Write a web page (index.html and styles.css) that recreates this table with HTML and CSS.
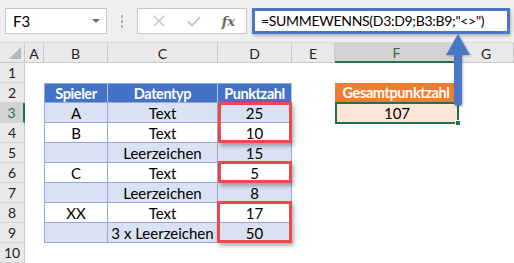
FILE: index.html
```html
<!DOCTYPE html>
<html lang="de">
<head>
<meta charset="utf-8">
<link rel="stylesheet" href="styles.css">
</head>
<body>
<div class="app">
  <div class="toolbar">
    <div class="namebox"><span class="ref">F3</span><span class="caret"></span></div>
    <div class="dots"><i></i><i></i><i></i></div>
    <div class="fbtns">
      <svg class="ico" width="14" height="14" viewBox="0 0 14 14"><path d="M2 2 L12 12 M12 2 L2 12" stroke="#c8c8c8" stroke-width="1.6" fill="none"/></svg>
      <svg class="ico" width="16" height="14" viewBox="0 0 16 14"><path d="M2 7.5 L6 11.5 L14 3" stroke="#c8c8c8" stroke-width="2" fill="none"/></svg>
      <span class="fx">fx</span>
    </div>
    <div class="formula">=SUMMEWENNS(D3:D9;B3:B9;"&lt;&gt;")</div>
  </div>
  <div class="sheet">
    <div class="hd corner"><span class="tri"></span></div>
    <div class="hd col">A</div><div class="hd col">B</div><div class="hd col">C</div><div class="hd col">D</div><div class="hd col">E</div><div class="hd col sel">F</div><div class="hd col">G</div>

    <div class="hd row">1</div><div></div><div></div><div></div><div></div><div></div><div></div><div></div>

    <div class="hd row">2</div><div></div>
    <div class="t th first">Spieler</div><div class="t th">Datentyp</div><div class="t th">Punktzahl</div>
    <div></div><div class="orange">Gesamtpunktzahl</div><div></div>

    <div class="hd row sel">3</div><div></div>
    <div class="t b first">A</div><div class="t b">Text</div><div class="t b">25</div>
    <div></div><div class="result">107<span class="handle"></span></div><div></div>

    <div class="hd row">4</div><div></div>
    <div class="t first">B</div><div class="t">Text</div><div class="t">10</div>
    <div></div><div></div><div></div>

    <div class="hd row">5</div><div></div>
    <div class="t b first"></div><div class="t b">Leerzeichen</div><div class="t b">15</div>
    <div></div><div></div><div></div>

    <div class="hd row">6</div><div></div>
    <div class="t first">C</div><div class="t">Text</div><div class="t">5</div>
    <div></div><div></div><div></div>

    <div class="hd row">7</div><div></div>
    <div class="t b first"></div><div class="t b">Leerzeichen</div><div class="t b">8</div>
    <div></div><div></div><div></div>

    <div class="hd row">8</div><div></div>
    <div class="t first">XX</div><div class="t">Text</div><div class="t">17</div>
    <div></div><div></div><div></div>

    <div class="hd row">9</div><div></div>
    <div class="t b first"></div><div class="t b">3 x Leerzeichen</div><div class="t b">50</div>
    <div></div><div></div><div></div>

    <div class="hd row">10</div><div></div><div></div><div></div><div></div><div></div><div></div><div></div>
  </div>

  <div class="redbox box1"></div>
  <div class="redbox box2"></div>
  <div class="redbox box3"></div>

  <svg class="arrow" width="26" height="76" viewBox="0 0 26 76">
    <path d="M9 20 L17 20 L17 70 Q17 73 13 73 Q9 73 9 70 Z" fill="#4a76c6"/>
    <path d="M1 22 L13 1 L25 22 Z" fill="#4a76c6"/>
  </svg>
</div>
</body>
</html>
```
FILE: styles.css
```css
* { box-sizing: border-box; }
html, body { margin: 0; padding: 0; background: #fff; }
body { font-family: Lato, "Open Sans", sans-serif; font-size: 15px; color: #000; }
.app { position: relative; width: 514px; height: 263px; overflow: hidden; }

.toolbar {
  height: 43px;
  background: #efefef;
  border-bottom: 1px solid #d9d9d9;
  display: flex;
  align-items: flex-start;
  padding: 8px 0 0 5px;
}
.namebox {
  width: 102px; height: 26px;
  background: #fff; border: 1px solid #c6c6c6;
  display: flex; align-items: center; justify-content: space-between;
  padding: 0 6px 0 7px;
  font-size: 15px;
}
.caret {
  width: 0; height: 0;
  border-left: 4px solid transparent; border-right: 4px solid transparent;
  border-top: 4px solid #6a6a6a;
}
.dots { width: 30px; height: 26px; display: flex; flex-direction: column; align-items: center; justify-content: center; gap: 2px; }
.dots i { display: block; width: 2px; height: 3px; background: #b4b4b4; }
.fbtns {
  width: 110px; height: 26px;
  background: #fff; border: 1px solid #c6c6c6;
  display: flex; align-items: center; justify-content: space-between;
  padding: 0 11px 0 14px;
}
.fx { font-family: "DejaVu Serif", "Liberation Serif", serif; font-style: italic; font-size: 13px; color: #666; font-weight: bold; }
.formula {
  margin-left: 5px;
  width: 258px; height: 26px;
  background: #fff;
  border: 3px solid #4a76c6;
  padding: 0 0 0 6px;
  font-size: 14px;
  letter-spacing: -0.3px;
  line-height: 20px;
  white-space: nowrap;
  box-shadow: 1px 2px 3px rgba(0,0,0,0.25);
}

.sheet {
  display: grid;
  grid-template-columns: 25px 19px 64px 110px 74px 43px 124px 55px;
  grid-auto-rows: 20px;
}
.hd {
  background: #e9e9e9;
  color: #222;
  display: flex; align-items: center; justify-content: center;
  font-size: 14px;
}
.hd.col { border-right: 1px solid #c9c9c9; border-bottom: 1px solid #c9c9c9; padding-top: 1px; }
.hd.row { border-right: 1px solid #c9c9c9; border-bottom: 1px solid #d4d4d4; }
.hd.corner { border-right: 1px solid #c9c9c9; border-bottom: 1px solid #c9c9c9; position: relative; }
.tri {
  position: absolute; right: 3px; bottom: 3px;
  width: 0; height: 0;
  border-left: 12px solid transparent;
  border-bottom: 12px solid #b8b8b8;
}
.hd.sel { background: #d3d3d3; color: #217346; }
.hd.col.sel { border-bottom: 2px solid #217346; }
.hd.row.sel { border-right: 2px solid #217346; }

.t {
  display: flex; align-items: center; justify-content: center;
  border-right: 1px solid #8ea9db;
  border-bottom: 1px solid #8ea9db;
  padding-top: 1px;
}
.t.first { border-left: 1px solid #8ea9db; }
.t.b { background: #d9e1f2; }
.t.th { background: #4472c4; color: #fff; font-weight: bold; letter-spacing: -0.4px; font-size: 14.5px; border-top: 1px solid #8ea9db; border-right-color: #b4c6e7; }

.orange {
  background: #ed7d31; color: #fff; font-weight: bold;
  font-size: 14.5px; letter-spacing: -0.4px;
  display: flex; align-items: center; justify-content: center;
  border-bottom: 1px solid #f4b084;
  margin-right: 2px;
}
.result {
  position: relative;
  background: #fce4d6;
  border: 2px solid #217346;
  display: flex; align-items: center; justify-content: center;
  margin-top: -1px; height: 22px;
}
.handle {
  position: absolute; right: -4px; bottom: -4px;
  width: 6px; height: 6px; background: #217346; border: 1px solid #fff;
}

.redbox {
  position: absolute;
  border: 3px solid #f04848;
  box-shadow: 2px 3px 4px rgba(0,0,0,0.3);
}
.box1 { left: 218px; top: 102px; width: 74px; height: 41px; }
.box2 { left: 218px; top: 161px; width: 74px; height: 22px; }
.box3 { left: 217px; top: 201px; width: 75px; height: 42px; }

.arrow { position: absolute; left: 445px; top: 33px; filter: drop-shadow(1px 1px 1px rgba(0,0,0,0.25)); }
```
